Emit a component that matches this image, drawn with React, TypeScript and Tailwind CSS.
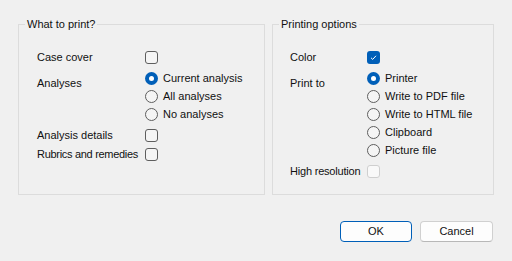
import { ReactNode } from "react";

function CheckBox({ checked, disabled }: { checked?: boolean; disabled?: boolean }) {
  if (checked) {
    return (
      <span className="flex h-[13px] w-[13px] shrink-0 items-center justify-center rounded-[3px] bg-[#005fb8]">
        <svg width="9" height="9" viewBox="0 0 9 9" fill="none">
          <path d="M2 4.8 L3.7 6.4 L7 2.8" stroke="#ffffff" strokeWidth="1" />
        </svg>
      </span>
    );
  }
  return (
    <span
      className={
        disabled
          ? "block h-[13px] w-[13px] shrink-0 rounded-[3px] border border-[#cfcfcf] bg-[#f9f9f9]"
          : "block h-[13px] w-[13px] shrink-0 rounded-[3px] border border-[#5e5e5e] bg-[#f5f5f5]"
      }
    />
  );
}

function Radio({ label, checked }: { label: string; checked?: boolean }) {
  return (
    <div className="flex h-[18px] items-center gap-[5px]">
      {checked ? (
        <span className="flex h-[13px] w-[13px] items-center justify-center rounded-full bg-[#005fb8]">
          <span className="h-[5px] w-[5px] rounded-full bg-white" />
        </span>
      ) : (
        <span className="block h-[13px] w-[13px] rounded-full border border-[#5e5e5e] bg-[#f5f5f5]" />
      )}
      <span>{label}</span>
    </div>
  );
}

function GroupBox({
  title,
  className,
  children,
}: {
  title: string;
  className: string;
  children: ReactNode;
}) {
  return (
    <div className={"relative h-[171px] border border-[#dcdcdc] " + className}>
      <span className="absolute -top-[8px] left-[6px] bg-[#f0f0f0] px-[2px] leading-[14px]">
        {title}
      </span>
      {children}
    </div>
  );
}

export default function App() {
  return (
    <div
      className="flex h-[261px] w-[512px] flex-col bg-[#f0f0f0] pl-[18px] pr-[18px] pt-[24px] text-[11px] text-[#111]"
      style={{ fontFamily: '"Liberation Sans", Arial, sans-serif' }}
    >
      <div className="flex gap-[7px]">
        <GroupBox title="What to print?" className="w-[247px] pl-[18px] pt-[23px]">
          <div className="flex h-[18px] items-center">
            <span className="w-[108px]">Case cover</span>
            <CheckBox />
          </div>
          <div className="mt-[3px] flex">
            <span className="w-[108px] pt-[6px]">Analyses</span>
            <div className="flex flex-col">
              <Radio label="Current analysis" checked />
              <Radio label="All analyses" />
              <Radio label="No analyses" />
            </div>
          </div>
          <div className="mt-[3px] flex h-[18px] items-center">
            <span className="w-[108px]">Analysis details</span>
            <CheckBox />
          </div>
          <div className="mt-[1px] flex h-[18px] items-center">
            <span className="w-[108px] whitespace-nowrap tracking-[-0.3px]">
              Rubrics and remedies
            </span>
            <CheckBox />
          </div>
        </GroupBox>
        <GroupBox title="Printing options" className="w-[222px] pl-[17px] pt-[23px]">
          <div className="flex h-[18px] items-center">
            <span className="w-[77px]">Color</span>
            <CheckBox checked />
          </div>
          <div className="mt-[3px] flex">
            <span className="w-[77px] pt-[6px]">Print to</span>
            <div className="flex flex-col">
              <Radio label="Printer" checked />
              <Radio label="Write to PDF file" />
              <Radio label="Write to HTML file" />
              <Radio label="Clipboard" />
              <Radio label="Picture file" />
            </div>
          </div>
          <div className="mt-[3px] flex h-[18px] items-center">
            <span className="w-[77px] whitespace-nowrap tracking-[-0.2px]">High resolution</span>
            <CheckBox disabled />
          </div>
        </GroupBox>
      </div>
      <div className="mr-[1px] mt-[26px] flex justify-end gap-[8px]">
        <button className="h-[21px] w-[72px] rounded-[4px] border border-[#005fb8] bg-[#fdfdfd]">
          OK
        </button>
        <button className="h-[21px] w-[73px] rounded-[4px] border border-[#d0d0d0] border-b-[#b8b8b8] bg-[#fdfdfd]">
          Cancel
        </button>
      </div>
    </div>
  );
}
